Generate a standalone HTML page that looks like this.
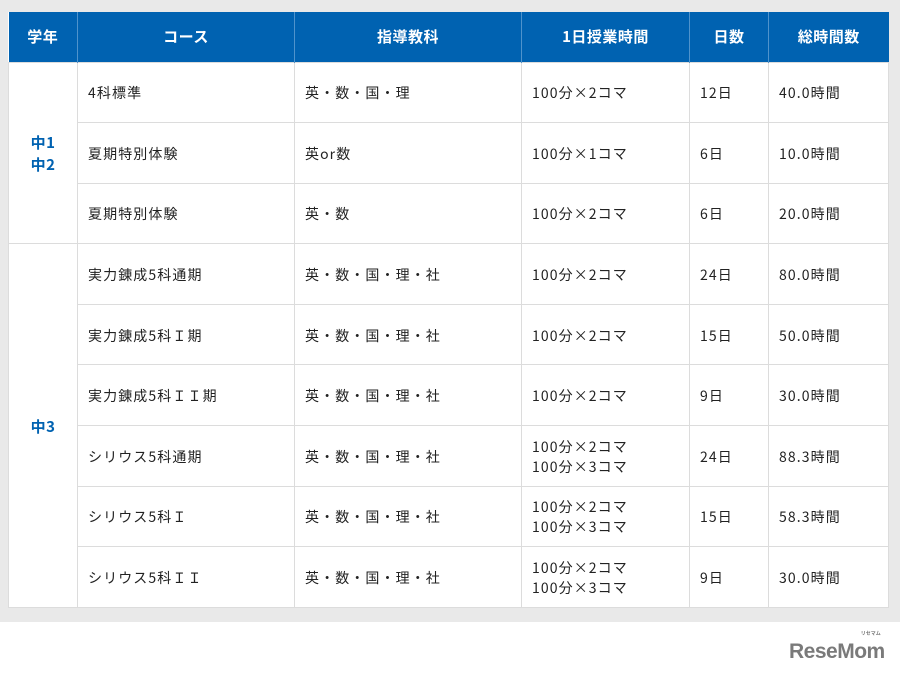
<!DOCTYPE html>
<html><head><meta charset="utf-8"><style>
*{margin:0;padding:0;box-sizing:border-box}
body{width:900px;height:675px;background:#fff;font-family:"Noto Sans CJK JP","Liberation Sans",sans-serif;position:relative;overflow:hidden}
.bg{position:absolute;left:0;top:0;width:900px;height:622px;background:#e9e9e9}
table{position:absolute;left:8px;top:12px;border-collapse:collapse;background:#fff;table-layout:fixed}
th{background:#0062b1;color:#fff;font-size:15px;font-weight:bold;height:50px;border-left:1px solid #4f93cc;text-align:center;letter-spacing:0.5px}
th:first-child{border-left:none}
td{height:60.6px;font-size:14px;letter-spacing:1.1px;color:#222;border:1px solid #dcdcdc;padding:2px 0 0 10px;vertical-align:middle;line-height:20px}
td.g{color:#0062b1;font-weight:bold;font-size:15px;text-align:center;padding:2px 0 0 0;line-height:22px;letter-spacing:0.5px}
.logo{position:absolute;left:789px;top:640px;font-size:21px;font-weight:bold;color:#7a7a7a;letter-spacing:-0.5px;font-family:"Liberation Sans",sans-serif;line-height:24px}
.logo small{position:absolute;right:4px;top:-9px;font-size:5px;letter-spacing:0;font-family:"Noto Sans CJK JP",sans-serif;line-height:6px}
</style></head><body>
<div class="bg"></div>
<table>
<colgroup><col style="width:69px"><col style="width:217px"><col style="width:227px"><col style="width:168px"><col style="width:79px"><col style="width:120px"></colgroup>
<tr><th>学年</th><th>コース</th><th>指導教科</th><th>1日授業時間</th><th>日数</th><th>総時間数</th></tr>
<tr><td class="g" rowspan="3">中1<br>中2</td><td>4科標準</td><td>英・数・国・理</td><td>100分×2コマ</td><td>12日</td><td>40.0時間</td></tr>
<tr><td>夏期特別体験</td><td>英or数</td><td>100分×1コマ</td><td>6日</td><td>10.0時間</td></tr>
<tr><td>夏期特別体験</td><td>英・数</td><td>100分×2コマ</td><td>6日</td><td>20.0時間</td></tr>
<tr><td class="g" rowspan="6">中3</td><td>実力錬成5科通期</td><td>英・数・国・理・社</td><td>100分×2コマ</td><td>24日</td><td>80.0時間</td></tr>
<tr><td>実力錬成5科Ｉ期</td><td>英・数・国・理・社</td><td>100分×2コマ</td><td>15日</td><td>50.0時間</td></tr>
<tr><td>実力錬成5科ＩＩ期</td><td>英・数・国・理・社</td><td>100分×2コマ</td><td>9日</td><td>30.0時間</td></tr>
<tr><td>シリウス5科通期</td><td>英・数・国・理・社</td><td>100分×2コマ<br>100分×3コマ</td><td>24日</td><td>88.3時間</td></tr>
<tr><td>シリウス5科Ｉ</td><td>英・数・国・理・社</td><td>100分×2コマ<br>100分×3コマ</td><td>15日</td><td>58.3時間</td></tr>
<tr><td>シリウス5科ＩＩ</td><td>英・数・国・理・社</td><td>100分×2コマ<br>100分×3コマ</td><td>9日</td><td>30.0時間</td></tr>
</table>
<div class="logo">ReseMom<small>リセマム</small></div>
</body></html>
